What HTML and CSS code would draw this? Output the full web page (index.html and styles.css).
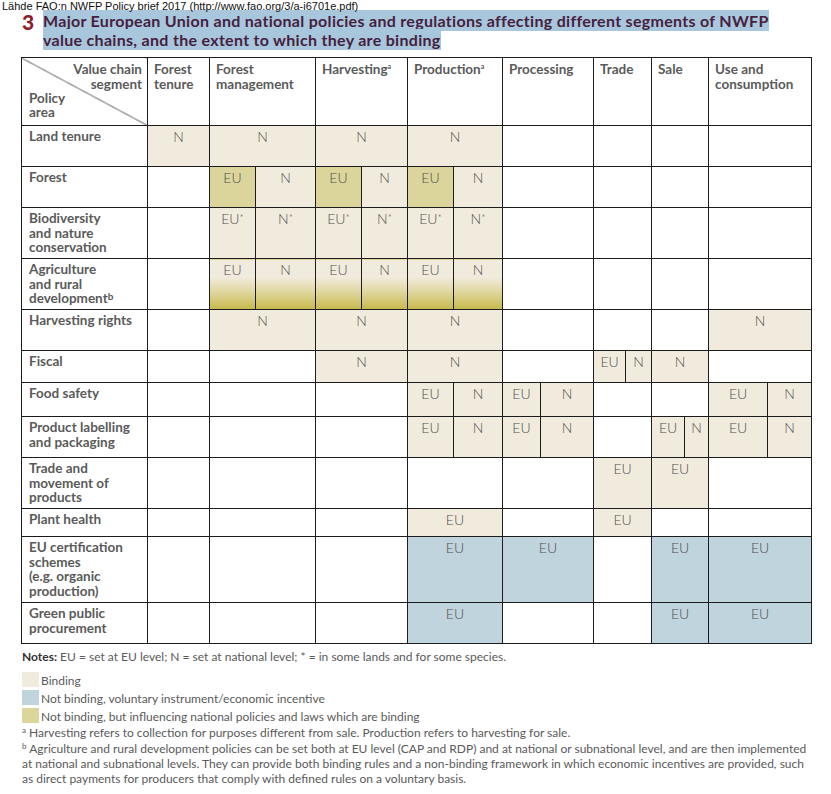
FILE: index.html
```html
<!DOCTYPE html>
<html>
<head>
<meta charset="utf-8">
<link rel="stylesheet" href="styles.css">
</head>
<body>
<div class="source">Lähde FAO:n NWFP Policy brief 2017 (http://www.fao.org/3/a-i6701e.pdf)</div>
<div class="title">
  <span class="num">3</span>
  <h1 class="heading"><span class="hl">Major European Union and national policies and regulations affecting different segments of NWFP<br>value chains, and the extent to which they are binding</span></h1>
</div>
<table class="grid">
  <colgroup>
    <col style="width:126px"><col style="width:62px"><col style="width:46px"><col style="width:60px">
    <col style="width:46px"><col style="width:46px"><col style="width:46px"><col style="width:49px">
    <col style="width:38px"><col style="width:53px"><col style="width:32px"><col style="width:26px">
    <col style="width:33px"><col style="width:24px"><col style="width:59px"><col style="width:44px">
  </colgroup>
  <tr class="h68">
    <th class="corner"><div class="vc">Value chain<br>segment</div><div class="pa">Policy<br>area</div></th>
    <th>Forest<br>tenure</th>
    <th colspan="2">Forest<br>management</th>
    <th colspan="2">Harvesting<sup>a</sup></th>
    <th colspan="2">Production<sup>a</sup></th>
    <th colspan="2">Processing</th>
    <th colspan="2">Trade</th>
    <th colspan="2">Sale</th>
    <th colspan="2">Use and<br>consumption</th>
  </tr>
  <tr class="h41">
    <td class="lbl">Land tenure</td>
    <td class="b">N</td>
    <td colspan="2" class="b">N</td>
    <td colspan="2" class="b">N</td>
    <td colspan="2" class="b">N</td>
    <td colspan="2"></td><td colspan="2"></td><td colspan="2"></td><td colspan="2"></td>
  </tr>
  <tr class="h41">
    <td class="lbl">Forest</td>
    <td></td>
    <td class="o">EU</td><td class="b">N</td>
    <td class="o">EU</td><td class="b">N</td>
    <td class="o">EU</td><td class="b">N</td>
    <td colspan="2"></td><td colspan="2"></td><td colspan="2"></td><td colspan="2"></td>
  </tr>
  <tr class="h51">
    <td class="lbl">Biodiversity<br>and nature<br>conservation</td>
    <td></td>
    <td class="b">EU<sup>*</sup></td><td class="b">N<sup>*</sup></td>
    <td class="b">EU<sup>*</sup></td><td class="b">N<sup>*</sup></td>
    <td class="b">EU<sup>*</sup></td><td class="b">N<sup>*</sup></td>
    <td colspan="2"></td><td colspan="2"></td><td colspan="2"></td><td colspan="2"></td>
  </tr>
  <tr class="h51">
    <td class="lbl">Agriculture<br>and rural<br>development<sup>b</sup></td>
    <td></td>
    <td class="g">EU</td><td class="g">N</td>
    <td class="g">EU</td><td class="g">N</td>
    <td class="g">EU</td><td class="g">N</td>
    <td colspan="2"></td><td colspan="2"></td><td colspan="2"></td><td colspan="2"></td>
  </tr>
  <tr class="h41">
    <td class="lbl">Harvesting rights</td>
    <td></td>
    <td colspan="2" class="b">N</td>
    <td colspan="2" class="b">N</td>
    <td colspan="2" class="b">N</td>
    <td colspan="2"></td><td colspan="2"></td><td colspan="2"></td>
    <td colspan="2" class="b">N</td>
  </tr>
  <tr class="h32">
    <td class="lbl">Fiscal</td>
    <td></td>
    <td colspan="2"></td>
    <td colspan="2" class="b">N</td>
    <td colspan="2" class="b">N</td>
    <td colspan="2"></td>
    <td class="b">EU</td><td class="b">N</td>
    <td colspan="2" class="b">N</td>
    <td colspan="2"></td>
  </tr>
  <tr class="h34">
    <td class="lbl">Food safety</td>
    <td></td>
    <td colspan="2"></td>
    <td colspan="2"></td>
    <td class="b">EU</td><td class="b">N</td>
    <td class="b">EU</td><td class="b">N</td>
    <td colspan="2"></td><td colspan="2"></td>
    <td class="b">EU</td><td class="b">N</td>
  </tr>
  <tr class="h41">
    <td class="lbl">Product labelling<br>and packaging</td>
    <td></td>
    <td colspan="2"></td>
    <td colspan="2"></td>
    <td class="b">EU</td><td class="b">N</td>
    <td class="b">EU</td><td class="b">N</td>
    <td colspan="2"></td>
    <td class="b">EU</td><td class="b">N</td>
    <td class="b">EU</td><td class="b">N</td>
  </tr>
  <tr class="h51">
    <td class="lbl">Trade and<br>movement of<br>products</td>
    <td></td>
    <td colspan="2"></td><td colspan="2"></td><td colspan="2"></td><td colspan="2"></td>
    <td colspan="2" class="b">EU</td>
    <td colspan="2" class="b">EU</td>
    <td colspan="2"></td>
  </tr>
  <tr class="h28">
    <td class="lbl">Plant health</td>
    <td></td>
    <td colspan="2"></td><td colspan="2"></td>
    <td colspan="2" class="b">EU</td>
    <td colspan="2"></td>
    <td colspan="2" class="b">EU</td>
    <td colspan="2"></td><td colspan="2"></td>
  </tr>
  <tr class="h66">
    <td class="lbl">EU certification<br>schemes<br>(e.g. organic<br>production)</td>
    <td></td>
    <td colspan="2"></td><td colspan="2"></td>
    <td colspan="2" class="v">EU</td>
    <td colspan="2" class="v">EU</td>
    <td colspan="2"></td>
    <td colspan="2" class="v">EU</td>
    <td colspan="2" class="v">EU</td>
  </tr>
  <tr class="h41">
    <td class="lbl">Green public<br>procurement</td>
    <td></td>
    <td colspan="2"></td><td colspan="2"></td>
    <td colspan="2" class="v">EU</td>
    <td colspan="2"></td>
    <td colspan="2"></td>
    <td colspan="2" class="v">EU</td>
    <td colspan="2" class="v">EU</td>
  </tr>
</table>
<div class="notes">
  <p class="first"><b>Notes:</b> EU = set at EU level; N = set at national level; * = in some lands and for some species.</p>
  <div class="legend"><span class="sw sw-b"></span><span class="lt">Binding</span></div>
  <div class="legend"><span class="sw sw-v"></span><span class="lt">Not binding, voluntary instrument/economic incentive</span></div>
  <div class="legend"><span class="sw sw-o"></span><span class="lt">Not binding, but influencing national policies and laws which are binding</span></div>
  <p class="fa"><sup>a</sup> Harvesting refers to collection for purposes different from sale. Production refers to harvesting for sale.</p>
  <p class="fb"><sup>b</sup> Agriculture and rural development policies can be set both at EU level (CAP and RDP) and at national or subnational level, and are then implemented<br>at national and subnational levels. They can provide both binding rules and a non-binding framework in which economic incentives are provided, such<br>as direct payments for producers that comply with defined rules on a voluntary basis.</p>
</div>
</body>
</html>
```

FILE: styles.css
```css
html, body {
  margin: 0;
  padding: 0;
  background: #ffffff;
}
body {
  width: 831px;
  font-family: "Lato", "Open Sans", sans-serif;
  color: #555555;
}
.source {
  font-family: "Liberation Sans", Arial, sans-serif;
  font-size: 11px;
  line-height: 12px;
  color: #111111;
  padding-left: 2px;
  height: 11px;
  position: relative;
  z-index: 2;
}
.title {
  display: flex;
  align-items: flex-start;
  padding-left: 22px;
  height: 46px;
}
.num {
  font-family: "Lato", sans-serif;
  font-weight: 900;
  font-size: 21px;
  line-height: 20px;
  color: #8b1e29;
  width: 21px;
  padding-top: 1px;
}
.heading {
  margin: 0;
  font-family: "Lato", sans-serif;
  font-weight: 700;
  font-size: 16px;
  letter-spacing: 0.3px;
  line-height: 19px;
  color: #45213f;
  white-space: nowrap;
}
.hl {
  background: #a9c7dc;
  padding: 1px 0;
}
.grid {
  margin-left: 21px;
  width: 790px;
  table-layout: fixed;
  border-collapse: collapse;
  font-family: "Lato", sans-serif;
}
.grid th, .grid td {
  border: 1px solid #1c1c1c;
  padding: 0;
  vertical-align: top;
  font-size: 13px;
  line-height: 15px;
}
.grid th {
  text-align: left;
  font-weight: 700;
  font-size: 13.5px;
  color: #5a5a5a;
  padding: 4px 5px 0 6px;
}
.grid th sup, .lbl sup {
  font-size: 7px;
  vertical-align: 5px;
  line-height: 0;
}
.grid td {
  text-align: center;
  font-weight: 300;
  font-size: 14px;
  color: #505050;
  padding-top: 3px;
}
.grid td sup {
  font-size: 10px;
  vertical-align: 3px;
  line-height: 0;
}
.grid td.lbl {
  text-align: left;
  font-weight: 700;
  font-size: 13.5px;
  line-height: 14.5px;
  color: #5a5a5a;
  padding: 3px 4px 0 7px;
}
.grid th.corner {
  padding: 4px 5px 0 7px;
  background: linear-gradient(to top right, transparent calc(50% - 0.7px), #333 50%, transparent calc(50% + 0.7px));
}
.vc {
  text-align: right;
}
.pa {
  margin-top: -1px;
  line-height: 14px;
}
.h68 { height: 68px; }
.h41 { height: 41px; }
.h51 { height: 51px; }
.h32 { height: 32px; }
.h34 { height: 34px; }
.h28 { height: 28px; }
.h66 { height: 66px; }
.b { background: #f1ebdd; }
.o { background: #dbd59b; }
.v { background: #bfd4dc; }
.g { background: linear-gradient(#f1ebdd 0%, #f1ebdd 35%, #e2d9a5 62%, #c6b84a 100%); }
.notes {
  margin-left: 22px;
  width: 800px;
  font-family: "Lato", sans-serif;
  font-size: 12px;
  line-height: 15px;
  color: #5a5a5a;
  padding-top: 5px;
  white-space: nowrap;
}
.notes p {
  margin: 0;
}
.notes p.first {
  margin-bottom: 5px;
}
.notes p.fa {
  margin-top: 2px;
}
.notes p.fb {
  margin-top: 1px;
}
.notes b {
  color: #333;
  font-weight: 700;
}
.notes sup {
  font-size: 8px;
  vertical-align: 4px;
  line-height: 0;
}
.legend {
  display: flex;
  align-items: flex-end;
  height: 18px;
}
.sw {
  width: 17px;
  height: 15px;
  margin-right: 2px;
}
.lt {
  line-height: 13px;
}
.sw-b { background: #f1ebdd; }
.sw-v { background: #bfd4dc; }
.sw-o { background: #ddd69c; }
```
